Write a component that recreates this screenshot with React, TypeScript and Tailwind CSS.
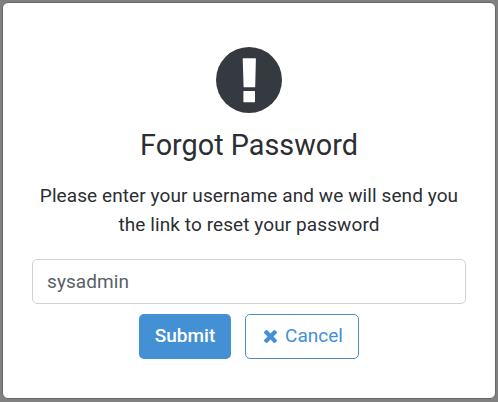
function ExclamationCircle() {
  return (
    <svg viewBox="0 0 66 66" className="h-[66px] w-[66px]">
      <circle cx="33" cy="33" r="33" className="fill-[#343a40]" />
      <path
        d="M27.2 11.2h12.2q.5 0 .5.5l-.7 28q0 .6-.6.6H28.2q-.6 0-.6-.6l-.9-28q0-.5.5-.5zM28 44h10.4q.6 0 .6.6v10.1q0 .6-.6.6H28q-.6 0-.6-.6V44.6q0-.6.6-.6z"
        className="fill-white"
      />
    </svg>
  );
}

function TimesIcon() {
  return (
    <svg viewBox="302 366 1188 1188" className="h-[13px] w-[13px] fill-current">
      <path d="M1490 1322q0 40-28 68l-136 136q-28 28-68 28t-68-28l-294-294-294 294q-28 28-68 28t-68-28l-136-136q-28-28-28-68t28-68l294-294-294-294q-28-28-28-68t28-68l136-136q28-28 68-28t68 28l294 294 294-294q28-28 68-28t68 28l136 136q28 28 28 68t-28 68l-294 294 294 294q28 28 28 68z" />
    </svg>
  );
}

export default function App() {
  return (
    <div className="h-[402px] w-[498px] bg-[#808080] pt-0.5 pl-0.5 font-[Roboto,sans-serif] text-[#2b2e32]">
      <div className="flex h-[397px] w-[494px] flex-col items-center rounded-md border border-[#666666] bg-white pt-11">
        <ExclamationCircle />

        <h1 className="mt-[15px] text-[28.8px] leading-[35px]">Forgot Password</h1>

        <p className="mt-[18px] text-center text-[19px] leading-[29px] tracking-[0.09px]">
          Please enter your username and we will send you
          <br />
          the link to reset your password
        </p>

        <input
          type="text"
          defaultValue="sysadmin"
          className="mt-5 h-[45px] w-[434px] rounded-[5px] border border-[#d0d3d6] px-3.5 text-[19px] tracking-[0.09px] text-[#5a6066] outline-none"
        />

        <div className="mt-2.5 flex gap-3.5">
          <button className="h-[45px] w-[92px] rounded-[5px] bg-[#4390d5] text-[19px] font-medium text-white">
            Submit
          </button>
          <button className="flex h-[45px] w-[114px] items-center justify-center gap-2 rounded-[5px] border border-[#4a8fc4] pl-[3px] text-[19px] text-[#4390d5]">
            <TimesIcon />
            Cancel
          </button>
        </div>
      </div>
    </div>
  );
}
